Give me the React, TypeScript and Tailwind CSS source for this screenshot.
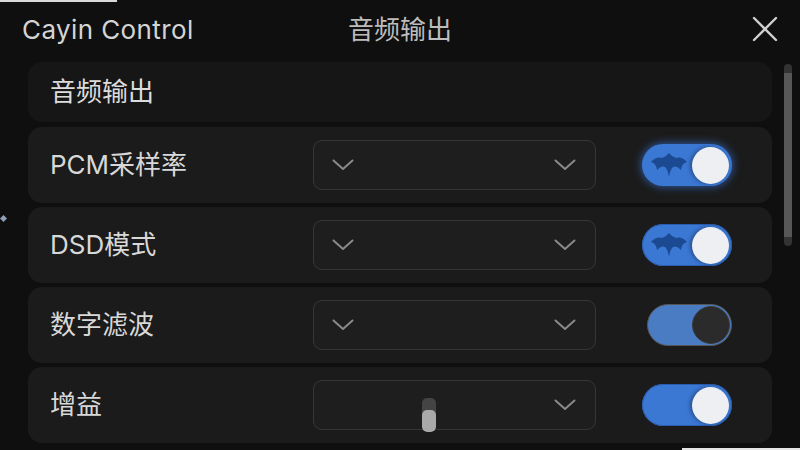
import React from "react";

const font = { fontFamily: '"Inter", "Noto Sans CJK SC", sans-serif' };

function Chevron() {
  return (
    <svg width="22" height="12" viewBox="0 0 22 12" fill="none">
      <path d="M1.5 1.5 L11 10 L20.5 1.5" stroke="#8a8a8a" strokeWidth="2" strokeLinecap="round" strokeLinejoin="round" />
    </svg>
  );
}

function Bat() {
  return (
    <svg width="36" height="24" viewBox="0 0 36 24">
      <path
        d="M0 9 Q5 3 11 5 Q15 4 18 0 Q21 4 25 5 Q31 3 36 9 Q31 10 30 17 Q26 12 22 14 Q19 17 18 24 Q17 17 14 14 Q10 12 6 17 Q5 10 0 9 Z"
        fill="#1c4a92"
      />
    </svg>
  );
}

function Toggle({ kind }: { kind: "glow" | "bat" | "off" | "plain" }) {
  if (kind === "off") {
    return (
      <div className="ml-[5px] w-[85px] h-[42px] rounded-full bg-[#4a7cc4] border border-[#555] flex items-center justify-end pr-[1px]">
        <div className="w-[38px] h-[38px] rounded-full bg-[#2b2b2b] border border-[#3a3a3a]" />
      </div>
    );
  }
  return (
    <div
      className={
        "w-[90px] h-[42px] rounded-full bg-[#3b78d4] flex items-center pl-[9px] pr-[3px] " +
        (kind === "glow" ? "shadow-[0_0_10px_rgba(60,130,240,0.75)]" : "shadow-[inset_0_0_0_1px_rgba(40,90,170,0.9)]")
      }
    >
      <div className="flex-1 flex items-center">{kind !== "plain" && <Bat />}</div>
      <div className="w-[37px] h-[37px] rounded-full bg-[#eeeff2] shadow-[-2px_0_4px_rgba(0,0,0,0.35)]" />
    </div>
  );
}

function Dropdown({ slider }: { slider?: boolean }) {
  return (
    <div className="relative w-[283px] h-[50px] rounded-[9px] bg-[#1e1e1e] border border-[#363636] flex items-center justify-between pl-[18px] pr-[19px]">
      {slider ? <div className="w-[22px]" /> : <Chevron />}
      <Chevron />
      {slider && (
        <div className="absolute left-[108px] top-[17px] w-[14px] h-[34px] rounded-[5px] bg-[#444] overflow-hidden flex flex-col justify-end">
          <div className="h-[22px] rounded-[5px] bg-[#a9a9a9]" />
        </div>
      )}
    </div>
  );
}

function Row({ label, toggle, slider }: { label: string; toggle: "glow" | "bat" | "off" | "plain"; slider?: boolean }) {
  return (
    <div className="h-[76px] rounded-[14px] bg-[#1b1b1b] flex items-center pl-[22px]">
      <div className="w-[263px] text-[26px] text-[#d8d8d8] leading-none">{label}</div>
      <Dropdown slider={slider} />
      <div className="ml-[46px]">
        <Toggle kind={toggle} />
      </div>
    </div>
  );
}

export default function App() {
  return (
    <div className="w-[800px] h-[450px] bg-[#0f0f0f] relative overflow-hidden" style={font}>
      <div className="absolute left-0 top-0 w-[117px] h-[2px] bg-[#d9d9d9]" />
      <div className="absolute right-0 bottom-0 w-[118px] h-[2px] bg-[#e6e6e6]" />
      <div className="absolute left-[1px] top-[216px] w-[5px] h-[5px] rotate-45 bg-[#8fa0b5]" />

      <div className="h-[58px] grid grid-cols-[1fr_auto_1fr] items-center pl-[22px] pr-[22px]">
        <div className="text-[26px] text-[#d4d4d4] tracking-[0.4px]">Cayin Control</div>
        <div className="text-[26px] text-[#bdbdbd]">音频输出</div>
        <div className="flex justify-end">
          <svg width="26" height="26" viewBox="0 0 26 26">
            <path d="M2 2 L24 24 M24 2 L2 24" stroke="#d0d0d0" strokeWidth="2.4" strokeLinecap="round" />
          </svg>
        </div>
      </div>

      <div className="flex pt-[4px] pl-[28px]">
        <div className="w-[744px] flex flex-col">
          <div className="h-[60px] rounded-[14px] bg-[#161616] flex items-center pl-[22px] mb-[5px]">
            <div className="text-[26px] text-[#dcdcdc] leading-none">音频输出</div>
          </div>
          <div className="flex flex-col gap-[4px]">
            <Row label="PCM采样率" toggle="glow" />
            <Row label="DSD模式" toggle="bat" />
            <Row label="数字滤波" toggle="off" />
            <Row label="增益" toggle="plain" slider />
          </div>
        </div>
        <div className="ml-[12px] mt-[2px] w-[8px] h-[182px] rounded-full bg-[#333] flex flex-col py-[9px]">
          <div className="flex-1 bg-[#575757]" />
        </div>
      </div>
    </div>
  );
}
